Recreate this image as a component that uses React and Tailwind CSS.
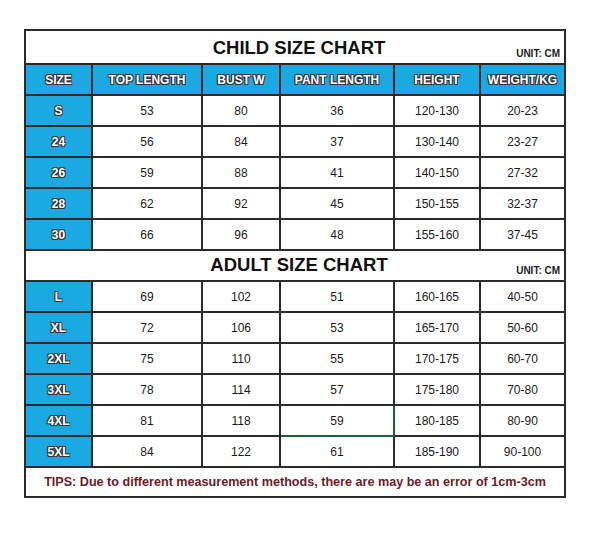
import React from "react";

const child = [
  ["S", "53", "80", "36", "120-130", "20-23"],
  ["24", "56", "84", "37", "130-140", "23-27"],
  ["26", "59", "88", "41", "140-150", "27-32"],
  ["28", "62", "92", "45", "150-155", "32-37"],
  ["30", "66", "96", "48", "155-160", "37-45"],
];

const adult = [
  ["L", "69", "102", "51", "160-165", "40-50"],
  ["XL", "72", "106", "53", "165-170", "50-60"],
  ["2XL", "75", "110", "55", "170-175", "60-70"],
  ["3XL", "78", "114", "57", "175-180", "70-80"],
  ["4XL", "81", "118", "59", "180-185", "80-90"],
  ["5XL", "84", "122", "61", "185-190", "90-100"],
];

const heads = ["SIZE", "TOP LENGTH", "BUST W", "PANT LENGTH", "HEIGHT", "WEIGHT/KG"];

const outline =
  "[text-shadow:-1px_-1px_0_#333,1px_-1px_0_#333,-1px_1px_0_#333,1px_1px_0_#333]";

function TitleRow({ title }) {
  return (
    <tr className="h-[31px]">
      <td colSpan={6} className="border-2 border-[#2b2b2b] relative p-0">
        <div className="text-center font-bold text-[18.5px] text-[#111] leading-none pl-[8px]">{title}</div>
        <span className="absolute right-[4px] top-[12px] text-[10px] font-bold text-[#222]">UNIT: CM</span>
      </td>
    </tr>
  );
}

function DataRow({ row, size }) {
  return (
    <tr className="h-[31px]">
      {row.map((c, i) =>
        i === 0 ? (
          <td
            key={i}
            className={`border-2 border-[#2b2b2b] bg-[#1ba9e2] text-white font-bold text-[12px] text-center p-0 ${outline}`}
          >
            {c}
          </td>
        ) : (
          <td
            key={i}
            className={`border-2 text-center text-[12px] text-[#1a1a1a] p-0 ${
              size === "4XL" && i === 3 ? "border-[#1f5c3c]" : "border-[#2b2b2b]"
            }`}
          >
            {c}
          </td>
        )
      )}
    </tr>
  );
}

export default function App() {
  return (
    <div className="w-[600px] h-[542px] bg-white pt-[29px] pl-[24px] font-['Liberation_Sans',Arial,sans-serif]">
      <table className="table-fixed border-collapse w-[540px]">
        <colgroup>
          <col className="w-[67px]" />
          <col className="w-[110px]" />
          <col className="w-[78px]" />
          <col className="w-[114px]" />
          <col className="w-[86px]" />
          <col className="w-[85px]" />
        </colgroup>
        <tbody>
          <tr className="h-[34px]">
            <td colSpan={6} className="border-2 border-[#2b2b2b] relative p-0">
              <div className="text-center font-bold text-[18.5px] text-[#111] leading-none pl-[8px] pt-[3px]">
                CHILD SIZE CHART
              </div>
              <span className="absolute right-[4px] top-[15px] text-[10px] font-bold text-[#222]">UNIT: CM</span>
            </td>
          </tr>
          <tr className="h-[31px]">
            {heads.map((h) => (
              <td
                key={h}
                className={`border-2 border-[#2b2b2b] bg-[#1ba9e2] text-white font-bold text-[12px] text-center p-0 whitespace-nowrap ${outline}`}
              >
                {h}
              </td>
            ))}
          </tr>
          {child.map((r) => (
            <DataRow key={r[0]} row={r} size={r[0]} />
          ))}
          <TitleRow title="ADULT SIZE CHART" />
          {adult.map((r) => (
            <DataRow key={r[0]} row={r} size={r[0]} />
          ))}
          <tr className="h-[30px]">
            <td colSpan={6} className="border-2 border-[#2b2b2b] p-0 text-center font-bold text-[12.6px] text-[#6e1a1f]">
              TIPS: Due to different measurement methods, there are may be an error of 1cm-3cm
            </td>
          </tr>
        </tbody>
      </table>
    </div>
  );
}
